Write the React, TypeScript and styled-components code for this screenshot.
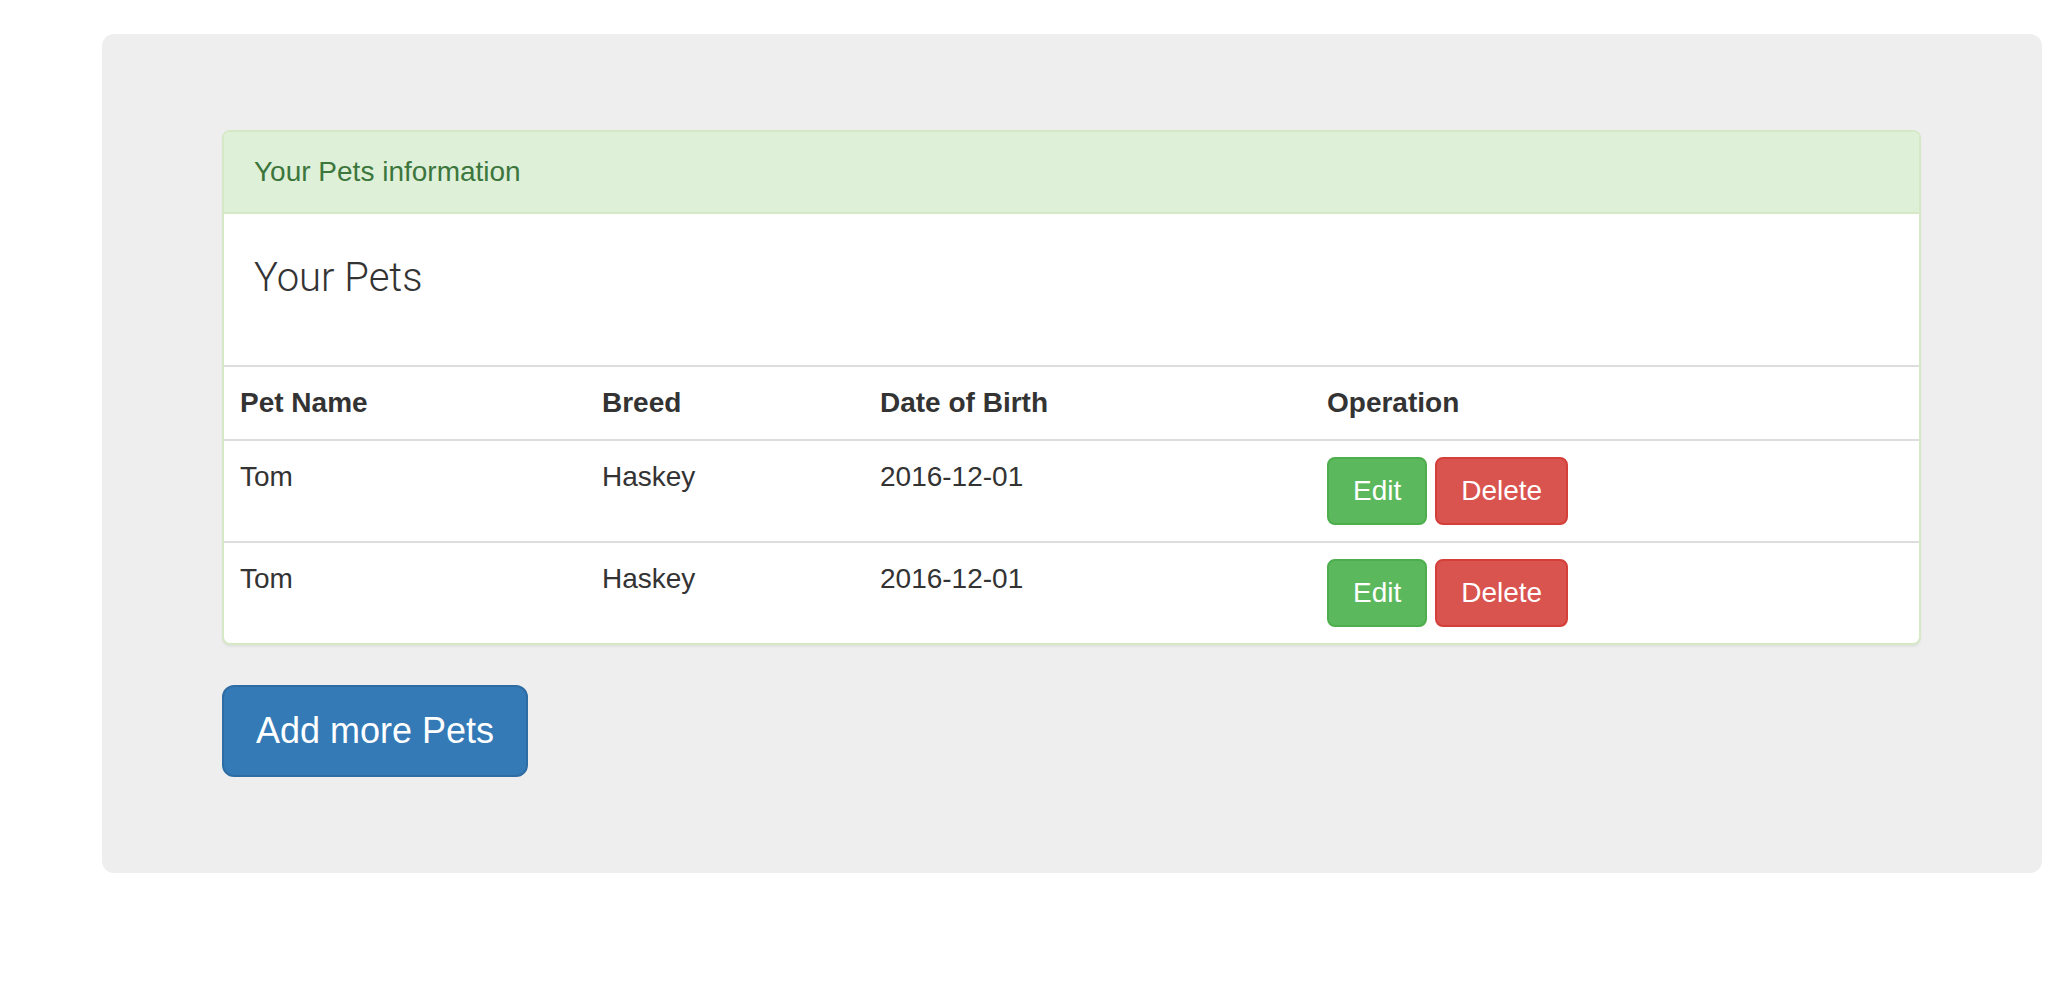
import styled, { createGlobalStyle } from "styled-components";

const GlobalStyle = createGlobalStyle`
  html, body {
    margin: 0;
    padding: 0;
    background: #fff;
    font-family: "Liberation Sans", Arial, sans-serif;
    color: #333;
  }
`;

const Page = styled.div`
  padding: 34px 26px 112px 102px;
`;

const Jumbotron = styled.div`
  background: #eee;
  border-radius: 12px;
  padding: 96px 121px 96px 120px;
`;

const Panel = styled.div`
  background: #fff;
  border: 2px solid #d6e9c6;
  border-radius: 8px;
  box-shadow: 0 2px 2px rgba(0, 0, 0, 0.05);
  margin-bottom: 40px;
  overflow: hidden;
`;

const PanelHeading = styled.div`
  background: #dff0d8;
  color: #3c763d;
  border-bottom: 2px solid #d6e9c6;
  padding: 20px 30px;
  font-size: 28px;
  line-height: 40px;
`;

const PanelBody = styled.div`
  padding: 30px;
`;

const Title = styled.h3`
  margin: 11px 0 34px;
  font-family: Roboto, "Liberation Sans", sans-serif;
  font-weight: 300;
  font-size: 40px;
  line-height: 46px;
  color: #333;
`;

const Table = styled.table`
  width: 100%;
  border-collapse: collapse;
  table-layout: fixed;
  font-size: 28px;
  line-height: 40px;
`;

const Th = styled.th<{ $w?: number }>`
  width: ${(p) => (p.$w ? `${p.$w}px` : "auto")};
  text-align: left;
  font-weight: bold;
  padding: 16px;
  border-top: 2px solid #ddd;
  border-bottom: 2px solid #ddd;
`;

const Td = styled.td`
  vertical-align: top;
  padding: 16px;
  border-top: 2px solid #ddd;
`;

const Actions = styled.div`
  display: flex;
  gap: 8px;
`;

const Button = styled.button<{ $kind: "success" | "danger" | "primary"; $lg?: boolean }>`
  font-family: "Liberation Sans", Arial, sans-serif;
  color: #fff;
  cursor: pointer;
  border: 2px solid
    ${(p) =>
      p.$kind === "success" ? "#4cae4c" : p.$kind === "danger" ? "#d43f3a" : "#2e6da4"};
  background: ${(p) =>
    p.$kind === "success" ? "#5cb85c" : p.$kind === "danger" ? "#d9534f" : "#337ab7"};
  font-size: ${(p) => (p.$lg ? "36px" : "28px")};
  line-height: ${(p) => (p.$lg ? "48px" : "40px")};
  padding: ${(p) => (p.$lg ? "20px 32px" : "12px 24px")};
  border-radius: ${(p) => (p.$lg ? "12px" : "8px")};
`;

const pets = [
  { name: "Tom", breed: "Haskey", dob: "2016-12-01" },
  { name: "Tom", breed: "Haskey", dob: "2016-12-01" },
];

export default function App() {
  return (
    <Page>
      <GlobalStyle />
      <Jumbotron>
        <Panel>
          <PanelHeading>Your Pets information</PanelHeading>
          <PanelBody>
            <Title>Your Pets</Title>
          </PanelBody>
          <Table>
            <thead>
              <tr>
                <Th $w={330}>Pet Name</Th>
                <Th $w={246}>Breed</Th>
                <Th $w={415}>Date of Birth</Th>
                <Th>Operation</Th>
              </tr>
            </thead>
            <tbody>
              {pets.map((pet, i) => (
                <tr key={i}>
                  <Td>{pet.name}</Td>
                  <Td>{pet.breed}</Td>
                  <Td>{pet.dob}</Td>
                  <Td>
                    <Actions>
                      <Button $kind="success">Edit</Button>
                      <Button $kind="danger">Delete</Button>
                    </Actions>
                  </Td>
                </tr>
              ))}
            </tbody>
          </Table>
        </Panel>
        <Button $kind="primary" $lg>
          Add more Pets
        </Button>
      </Jumbotron>
    </Page>
  );
}
